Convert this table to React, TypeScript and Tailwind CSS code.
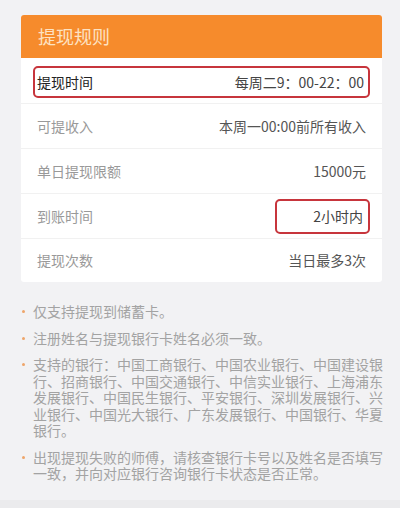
import React from "react";

const rows = [
  { label: "可提收入", value: "本周一00:00前所有收入" },
  { label: "单日提现限额", value: "15000元" },
];

const notes = [
  "仅支持提现到储蓄卡。",
  "注册姓名与提现银行卡姓名必须一致。",
  "支持的银行：中国工商银行、中国农业银行、中国建设银行、招商银行、中国交通银行、中信实业银行、上海浦东发展银行、中国民生银行、平安银行、深圳发展银行、兴业银行、中国光大银行、广东发展银行、中国银行、华夏银行。",
  "出现提现失败的师傅，请核查银行卡号以及姓名是否填写一致，并向对应银行咨询银行卡状态是否正常。",
];

export default function App() {
  return (
    <div
      className="w-[400px] h-[508px] bg-[#f2f2f4] flex flex-col"
      style={{ fontFamily: '"Noto Sans CJK SC", "Noto Sans", sans-serif' }}
    >
      <div className="flex-1 pt-[15px]">
        <div className="ml-[21px] mr-[18px] bg-white rounded-[3px] overflow-hidden">
          <div className="h-[43px] bg-[#f68b2c] flex items-center pl-[17px] text-[18px] text-[#fde2c2]">
            提现规则
          </div>

          <div className="h-[45px] pt-[8px] pb-[5px] px-[12px]">
            <div className="h-full border-2 border-[#c7353c] rounded-[5px] flex items-center justify-between pl-[2px] pr-[4px] text-[14px]">
              <span className="text-[#222]">提现时间</span>
              <span className="text-[#444]">每周二9：00-22：00</span>
            </div>
          </div>

          {rows.map((r) => (
            <div
              key={r.label}
              className="h-[45px] border-t border-[#f1f1f1] flex items-center justify-between pl-[16px] pr-[16px] text-[14px]"
            >
              <span className="text-[#999]">{r.label}</span>
              <span className="text-[#555]">{r.value}</span>
            </div>
          ))}

          <div className="h-[45px] border-t border-[#f1f1f1] flex items-center justify-between pl-[16px] pr-[12px] text-[14px]">
            <span className="text-[#999]">到账时间</span>
            <div className="w-[95px] h-[35px] border-2 border-[#c7353c] rounded-[5px] flex items-center justify-end pr-[5px] text-[#444]">
              2小时内
            </div>
          </div>

          <div className="h-[44px] border-t border-[#f1f1f1] flex items-center justify-between pl-[16px] pr-[16px] text-[14px]">
            <span className="text-[#999]">提现次数</span>
            <span className="text-[#555]">当日最多3次</span>
          </div>
        </div>

        <ul className="mt-[21px] pl-[33px] pr-[17px] flex flex-col gap-[10px]">
          {notes.map((n) => (
            <li key={n} className="relative text-[14px] leading-[16.5px] text-[#a3a3a3]">
              <span className="absolute left-[-11px] top-[7px] w-[3px] h-[3px] rounded-full bg-[#eea56a]" />
              {n}
            </li>
          ))}
        </ul>
      </div>
      <div className="h-[8px] bg-[#ebebed]" />
    </div>
  );
}
